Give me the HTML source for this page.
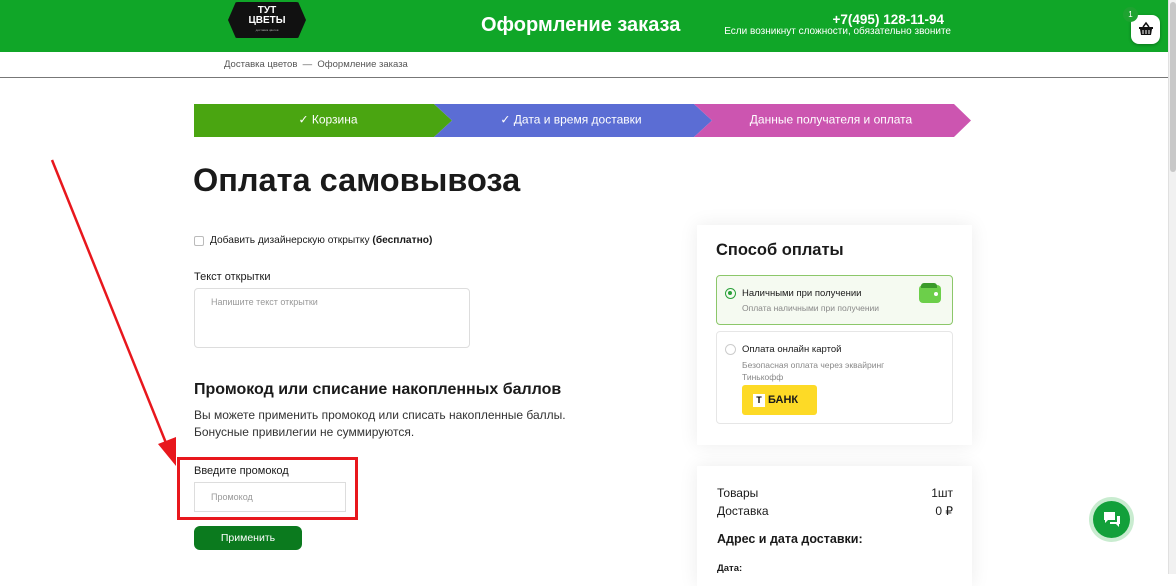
<!DOCTYPE html>
<html><head><meta charset="utf-8"><style>
*{box-sizing:border-box;margin:0;padding:0}
body{width:1176px;height:574px;overflow:hidden;background:#fff;font-family:"Liberation Sans","Noto Sans CJK SC",sans-serif;color:#1a1a1a;position:relative}
.abs{position:absolute}
.hdr{left:0;top:0;width:1168px;height:52px;background:#10a628}
.sb{left:1168px;top:0;width:8px;height:574px;background:#f1f1f1;border-left:1px solid #e0e0e0}
.sb div{position:absolute;left:1px;top:2px;width:6px;height:170px;background:#c8c8c8;border-radius:3px}
.card{background:#fff;box-shadow:0 0 18px rgba(0,0,0,.08)}
</style></head><body>
<div class="abs hdr"></div>
<div class="abs sb"><div></div></div>
<div class="abs" style="left:228px;top:2px;width:78px;height:36px;background:#111;border-radius:10px;clip-path:polygon(10% 0,90% 0,100% 50%,90% 100%,10% 100%,0 50%)"></div>
<div class="abs" style="left:228px;top:6px;width:78px;text-align:center;color:#fff;font-weight:bold;font-size:10px;line-height:10px">ТУТ<br>ЦВЕТЫ</div>
<div class="abs" style="left:228px;top:28px;width:78px;text-align:center;color:#aaa;font-size:3px">доставка цветов</div>
<div class="abs" style="left:481px;top:14px;color:#fff;font-size:20px;font-weight:bold">Оформление заказа</div>
<div class="abs" style="left:720px;top:12px;width:224px;text-align:right;color:#fff;font-size:13.5px;font-weight:bold">+7(495) 128-11-94</div>
<div class="abs" style="left:700px;top:26px;width:251px;text-align:right;color:#fff;font-size:10px">Если возникнут сложности, обязательно звоните</div>
<div class="abs" style="left:1131px;top:15px;width:29px;height:29px;background:#fff;border-radius:8px;box-shadow:0 1px 3px rgba(0,0,0,.3)"></div>
<svg class="abs" style="left:1138px;top:21px" width="16" height="16"><path d="M5 6L8 2L11 6" stroke="#111" stroke-width="1.5" fill="none"/><path d="M1 6h14v2h-1l-1 6H3L2 8H1z" fill="#111"/><path d="M5 9v4M8 9v4M11 9v4" stroke="#fff" stroke-width="1"/></svg>
<div class="abs" style="left:1123px;top:7px;width:15px;height:15px;border-radius:50%;background:#1ea330;color:#fff;font-size:8px;text-align:center;line-height:15px">1</div>
<div class="abs" style="left:224px;top:59px;font-size:9.5px;color:#555">Доставка цветов &nbsp;— &nbsp;Оформление заказа</div>
<div class="abs" style="left:0;top:77px;width:1168px;height:1px;background:#777"></div>
<svg class="abs" style="left:194px;top:104px" width="778" height="33">
<polygon points="0,0 240,0 258,16.5 240,33 0,33" fill="#4aa511"/>
<polygon points="240,0 500,0 518,16.5 500,33 240,33 258,16.5" fill="#5b6dd4"/>
<polygon points="500,0 760,0 777,16.5 760,33 500,33 518,16.5" fill="#cc55b0"/>
<text x="134" y="19.5" fill="#fff" font-size="12" text-anchor="middle" font-family="Liberation Sans">✓ Корзина</text>
<text x="377" y="19.5" fill="#fff" font-size="12" text-anchor="middle" font-family="Liberation Sans">✓ Дата и время доставки</text>
<text x="637" y="19.5" fill="#fff" font-size="12" text-anchor="middle" font-family="Liberation Sans">Данные получателя и оплата</text>
</svg>
<div class="abs" style="left:193px;top:162px;font-size:32.5px;font-weight:bold">Оплата самовывоза</div>
<div class="abs" style="left:194px;top:236px;width:10px;height:10px;border:1px solid #bbb;border-radius:2px"></div>
<div class="abs" style="left:210px;top:235px;font-size:10.2px">Добавить дизайнерскую открытку <b>(бесплатно)</b></div>
<div class="abs" style="left:194px;top:271px;font-size:11px">Текст открытки</div>
<div class="abs" style="left:194px;top:288px;width:276px;height:60px;border:1px solid #ddd;border-radius:4px"></div>
<div class="abs" style="left:211px;top:297px;font-size:9px;color:#999">Напишите текст открытки</div>
<div class="abs" style="left:194px;top:381px;font-size:16px;font-weight:bold">Промокод или списание накопленных баллов</div>
<div class="abs" style="left:194px;top:407px;font-size:12px;line-height:17px;color:#333">Вы можете применить промокод или списать накопленные баллы.<br>Бонусные привилегии не суммируются.</div>
<div class="abs" style="left:177px;top:457px;width:181px;height:63px;border:3px solid #e8171d"></div>
<div class="abs" style="left:194px;top:465px;font-size:11px">Введите промокод</div>
<div class="abs" style="left:194px;top:482px;width:152px;height:30px;border:1px solid #ddd"></div>
<div class="abs" style="left:211px;top:492px;font-size:9px;color:#999">Промокод</div>
<div class="abs" style="left:194px;top:526px;width:108px;height:24px;background:#0b7a1e;border-radius:6px;color:#fff;font-size:10.5px;text-align:center;line-height:24px">Применить</div>
<svg class="abs" style="left:0;top:0" width="700" height="574"><line x1="52" y1="160" x2="168" y2="448" stroke="#e8171d" stroke-width="2.5"/><polygon points="176,466 158,444 176,437" fill="#e8171d"/></svg>
<div class="abs card" style="left:697px;top:225px;width:275px;height:220px"></div>
<div class="abs" style="left:716px;top:241px;font-size:16.5px;font-weight:bold">Способ оплаты</div>
<div class="abs" style="left:716px;top:275px;width:237px;height:50px;border:1px solid #8cc76a;border-radius:4px;background:#f5faf1"></div>
<div class="abs" style="left:725px;top:288px;width:11px;height:11px;border:1.5px solid #2aa13a;border-radius:50%"><div style="margin:2px;width:4px;height:4px;border-radius:50%;background:#2aa13a"></div></div>
<div class="abs" style="left:742px;top:288px;font-size:9.5px">Наличными при получении</div>
<div class="abs" style="left:742px;top:303px;font-size:8.5px;color:#888">Оплата наличными при получении</div>
<div class="abs" style="left:919px;top:285px;width:22px;height:18px;background:#6ccf4a;border-radius:4px"></div>
<div class="abs" style="left:921px;top:283px;width:16px;height:5px;background:#3a9a2a;border-radius:3px 3px 0 0"></div>
<div class="abs" style="left:934px;top:292px;width:4px;height:4px;background:#fff;border-radius:50%"></div>
<div class="abs" style="left:716px;top:331px;width:237px;height:93px;border:1px solid #e6e6e6;border-radius:4px"></div>
<div class="abs" style="left:725px;top:344px;width:11px;height:11px;border:1px solid #ccc;border-radius:50%"></div>
<div class="abs" style="left:742px;top:344px;font-size:9.5px">Оплата онлайн картой</div>
<div class="abs" style="left:742px;top:359px;font-size:8.5px;line-height:12px;color:#888">Безопасная оплата через эквайринг<br>Тинькофф</div>
<div class="abs" style="left:742px;top:385px;width:75px;height:30px;background:#fdda26;border-radius:3px;font-weight:bold;font-size:11px;line-height:30px"><span style="display:inline-block;margin-left:11px;width:12px;height:13px;background:#fff;color:#000;font-size:9px;line-height:13px;text-align:center;vertical-align:middle">Т</span> БАНК</div>
<div class="abs card" style="left:697px;top:466px;width:275px;height:120px"></div>
<div class="abs" style="left:717px;top:486px;font-size:12px">Товары</div>
<div class="abs" style="left:900px;top:486px;width:53px;text-align:right;font-size:12px">1шт</div>
<div class="abs" style="left:717px;top:504px;font-size:12px">Доставка</div>
<div class="abs" style="left:900px;top:504px;width:53px;text-align:right;font-size:12px">0 ₽</div>
<div class="abs" style="left:717px;top:532px;font-size:12.5px;font-weight:bold">Адрес и дата доставки:</div>
<div class="abs" style="left:717px;top:563px;font-size:9.5px;font-weight:bold">Дата:</div>
<div class="abs" style="left:1089px;top:497px;width:45px;height:45px;border-radius:50%;background:#c9ecd0"></div>
<div class="abs" style="left:1093px;top:501px;width:37px;height:37px;border-radius:50%;background:#12a03a"></div>
<svg class="abs" style="left:1102px;top:510px" width="20" height="18"><path d="M2 2h11v8H6l-3 3v-3H2z" fill="#fff"/><path d="M15 6h3v8h-1v3l-3-3H8v-2h7z" fill="#fff"/></svg>
</body></html>
